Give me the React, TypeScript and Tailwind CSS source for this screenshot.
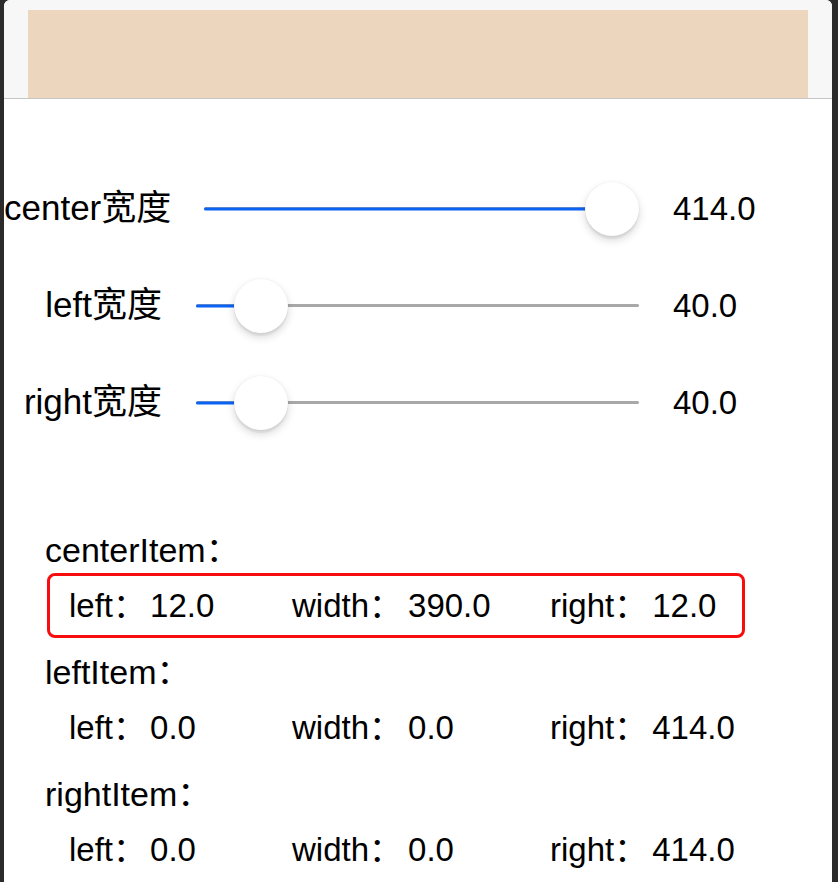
import React from 'react';

const MAX = 414;

function Slider({ value, width }: { value: number; width: number }) {
  const thumbLeft = (value / MAX) * (width - 54);
  return (
    <div className="relative flex h-[54px] shrink-0 items-center" style={{ width }}>
      <div className="h-[3px] w-full rounded-full bg-[#a8a8a8]" />
      <div
        className="absolute left-0 top-1/2 h-[3px] -translate-y-1/2 rounded-full bg-[#0b63f5]"
        style={{ width: thumbLeft + 27 }}
      />
      <div
        className="absolute top-0 h-[54px] w-[54px] rounded-full bg-white shadow-[0_4px_9px_rgba(0,0,0,0.16),0_3px_1px_rgba(0,0,0,0.05),0_0_0_0.5px_rgba(0,0,0,0.04)]"
        style={{ left: thumbLeft }}
      />
    </div>
  );
}

function SliderRow({ label, labelWidth, sliderWidth, value }: { label: string; labelWidth: string; sliderWidth: number; value: number }) {
  return (
    <div className="flex h-[97px] items-center">
      <div className={`${labelWidth} shrink-0 whitespace-nowrap text-right text-[35px]`}>{label}</div>
      <div className="ml-[34px]">
        <Slider value={value} width={sliderWidth} />
      </div>
      <div className="ml-[34px] text-[33px]">{value.toFixed(1)}</div>
    </div>
  );
}

function ItemBlock({ title, left, width, right, highlight }: { title: string; left: string; width: string; right: string; highlight?: boolean }) {
  return (
    <div className="mb-[11px]">
      <div className="flex h-[46px] items-center pl-[41px] text-[34px]">{title}：</div>
      <div
        className={`ml-[43px] flex h-[65px] w-[698px] items-center rounded-[8px] border-[3px] pl-[19px] text-[33px] ${
          highlight ? 'border-[#f70d0d]' : 'border-transparent'
        }`}
      >
        <div className="w-[223px] shrink-0 whitespace-nowrap">
          left：<span className="ml-[4px]">{left}</span>
        </div>
        <div className="w-[258px] shrink-0 whitespace-nowrap">
          width：<span className="ml-[6px]">{width}</span>
        </div>
        <div className="whitespace-nowrap">
          right：<span className="ml-[5px]">{right}</span>
        </div>
      </div>
    </div>
  );
}

export default function App() {
  return (
    <div className="flex h-[882px] w-[838px] overflow-hidden bg-[#2b2b2b] font-['Liberation_Sans','Noto_Sans_CJK_SC',sans-serif] text-black">
      <div className="ml-[4px] h-full w-[828px] overflow-hidden rounded-t-[6px] bg-white">
        {/* top bar */}
        <div className="h-[99px] border-b border-[#c6c6c6] bg-[#f7f7f7] px-6 pt-[10px]">
          <div className="h-full bg-[#ecd6be]" />
        </div>

        {/* sliders */}
        <div className="pt-[61px]">
          <SliderRow label="center宽度" labelWidth="w-[166px]" sliderWidth={435} value={414} />
          <SliderRow label="left宽度" labelWidth="w-[158px]" sliderWidth={443} value={40} />
          <SliderRow label="right宽度" labelWidth="w-[158px]" sliderWidth={443} value={40} />
        </div>

        {/* frames */}
        <div className="mt-[76px]">
          <ItemBlock title="centerItem" left="12.0" width="390.0" right="12.0" highlight />
          <ItemBlock title="leftItem" left="0.0" width="0.0" right="414.0" />
          <ItemBlock title="rightItem" left="0.0" width="0.0" right="414.0" />
        </div>
      </div>
    </div>
  );
}
